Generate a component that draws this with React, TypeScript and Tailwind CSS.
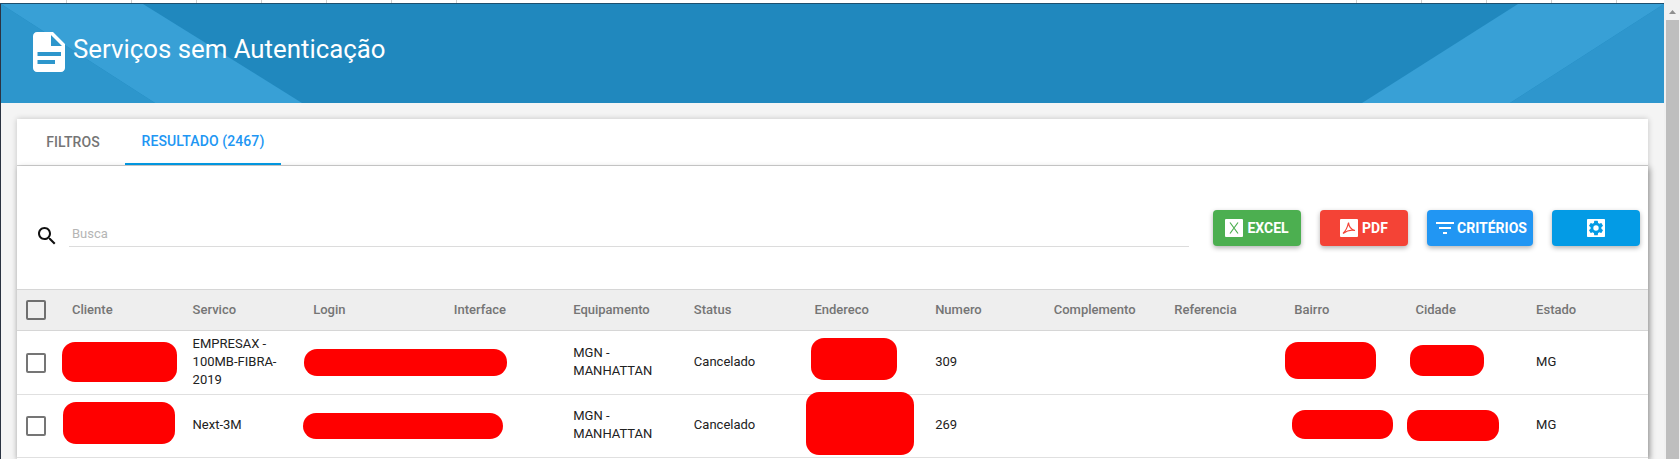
import React from 'react';

const HEADERS = ['Cliente', 'Servico', 'Login', 'Interface', 'Equipamento', 'Status', 'Endereco', 'Numero', 'Complemento', 'Referencia', 'Bairro', 'Cidade', 'Estado'];

function Redact({ className }: { className: string }) {
  return <span className={`absolute z-10 bg-[#ff0000] ${className}`} />;
}

function Checkbox({ header }: { header?: boolean }) {
  return <span className={`block w-[20px] h-[20px] ml-[9px] rounded-[2px] border-2 ${header ? 'border-[#6f6f6f]' : 'border-[#757575]'}`} />;
}

function TopStrip() {
  return (
    <div className="h-[3px] bg-white flex justify-between pl-[2px] pr-[47px]">
      <div className="flex">
        {[0, 1, 2, 3, 4, 5, 6].map((i) => <div key={i} className="w-[65px] border-r border-[#cfcfcf]" />)}
      </div>
      <div className="flex">
        {[0, 1, 2, 3, 4].map((i) => <div key={i} className="w-[65px] border-r border-[#cfcfcf]" />)}
      </div>
    </div>
  );
}

function Banner() {
  return (
    <header className="relative h-[99px] bg-[#2088be] overflow-hidden">
      {/* diagonal bands of the banner artwork */}
      <svg className="absolute inset-0 w-full h-full" viewBox="0 0 1663 99" preserveAspectRatio="none">
        <polygon points="0,0 142,0 301,99 154,99" fill="#38a0d6" />
        <polygon points="0,0 154,99 0,99" fill="#2d96cc" />
        <polygon points="1361,99 1517,0 1663,0 1509,99" fill="#38a0d6" />
        <polygon points="1663,0 1663,99 1509,99" fill="#2e96cd" />
      </svg>
      <div className="relative flex items-start pl-6 pt-6">
        <svg width="48" height="48" viewBox="0 0 24 24" fill="#ffffff">
          <path fillRule="evenodd" d="M14 2H6c-1.1 0-1.99.9-1.99 2L4 20c0 1.1.89 2 1.99 2H18c1.1 0 2-.9 2-2V8l-6-6zm-1 1.5L18.500 9H13V3.500zM6.250 12H18v2H6.250v-2zm0 4H15v2H6.250v-2z" />
        </svg>
        <h1 className="text-[25.8px] leading-[42px] text-white">Serviços sem Autenticação</h1>
      </div>
    </header>
  );
}

function Toolbar() {
  return (
    <div className="h-[123px] flex items-start pt-[44px] pl-[18px] pr-[8px]">
      <div className="flex-1 flex items-end h-[37px] mr-[24px]">
        <svg width="24" height="24" viewBox="0 0 24 24" fill="#111111" className="shrink-0 self-start mt-[14px]">
          <path d="M15.500 14h-.79l-.28-.27C15.410 12.590 16 11.110 16 9.500 16 5.910 13.090 3 9.500 3S3 5.910 3 9.500 5.910 16 9.500 16c1.610 0 3.090-.59 4.230-1.570l.27.28v.79l5 4.990L20.490 19l-4.990-5zm-6 0C7.010 14 5 11.990 5 9.500S7.010 5 9.500 5 14 7.010 14 9.500 11.990 14 9.500 14z" />
        </svg>
        <input placeholder="Busca" className="flex-1 ml-[10px] h-[25px] pl-[3px] pb-[2px] text-[13px] bg-transparent border-b border-[#dcdcdc] outline-none placeholder:text-[#b5b5b5]" />
      </div>
      <div className="flex gap-[19px] text-white text-[14px] font-bold">
        <button className="w-[88px] h-[36px] rounded bg-[#4caf50] shadow-[0_2px_5px_rgba(0,0,0,0.3)] flex items-center justify-center gap-1">
          <svg width="18" height="18" viewBox="0 0 18 18">
            <rect width="18" height="18" rx="1" fill="#ffffff" />
            <path d="M5 3.500L13 14.500M13 3.500L5 14.500" stroke="#4caf50" strokeWidth="1.200" fill="none" />
          </svg>
          EXCEL
        </button>
        <button className="w-[88px] h-[36px] rounded bg-[#f44336] shadow-[0_2px_5px_rgba(0,0,0,0.3)] flex items-center justify-center gap-1">
          <svg width="18" height="18" viewBox="0 0 18 18">
            <rect width="18" height="18" rx="1" fill="#ffffff" />
            <path d="M8.500 3.500C8 6 6.500 11 3 14.500M8.500 3.500C8.800 7 11 10.500 15 11.500C11.500 10.500 7 11.500 3 14.500" stroke="#f44336" strokeWidth="1.200" fill="none" />
          </svg>
          PDF
        </button>
        <button className="w-[106px] h-[36px] rounded bg-[#2196f3] shadow-[0_2px_5px_rgba(0,0,0,0.3)] flex items-center justify-center">
          <svg width="24" height="24" viewBox="0 0 24 24" fill="#ffffff">
            <path d="M10 18h4v-2h-4v2zM3 6v2h18V6H3zm3 7h12v-2H6v2z" />
          </svg>
          CRITÉRIOS
        </button>
        <button className="w-[88px] h-[36px] rounded bg-[#039be5] shadow-[0_2px_5px_rgba(0,0,0,0.3)] flex items-center justify-center">
          <svg width="18" height="18" viewBox="0 0 24 24">
            <rect width="24" height="24" rx="1" fill="#ffffff" />
            <path fill="#039be5" d="M19.140 12.940c.04-.3.060-.61.060-.94 0-.32-.02-.64-.07-.94l2.030-1.580a.49.49 0 0 0 .12-.61l-1.920-3.320a.49.49 0 0 0-.59-.22l-2.390.96c-.5-.38-1.030-.7-1.620-.94l-.36-2.540a.48.480 0 0 0-.48-.41h-3.840a.47.470 0 0 0-.47.410l-.36 2.540c-.59.240-1.130.57-1.620.94l-2.390-.96a.49.49 0 0 0-.59.220L2.740 8.870a.48.480 0 0 0 .12.610l2.030 1.580c-.05.3-.09.63-.09.940s.02.640.07.940l-2.030 1.580a.49.49 0 0 0-.12.610l1.920 3.320c.12.220.37.290.59.220l2.390-.96c.5.380 1.030.7 1.620.94l.36 2.540c.05.240.24.410.48.410h3.840c.24 0 .44-.17.47-.41l.36-2.540c.59-.24 1.130-.56 1.620-.94l2.390.96c.22.080.47 0 .59-.22l1.920-3.320a.48.480 0 0 0-.12-.61l-2.010-1.580zM12 15.600A3.600 3.600 0 1 1 12 8.400a3.600 3.600 0 0 1 0 7.200z" />
          </svg>
        </button>
      </div>
    </div>
  );
}

function DataTable() {
  return (
    <table className="w-full table-fixed text-[13px] text-left">
      <colgroup>
        <col className="w-[55px]" />
        <col className="w-[120.6px]" />
        <col className="w-[120.6px]" />
        <col className="w-[140.6px]" />
        <col className="w-[119.4px]" />
        <col className="w-[120.7px]" />
        <col className="w-[120.6px]" />
        <col className="w-[120.7px]" />
        <col className="w-[118.6px]" />
        <col className="w-[120.6px]" />
        <col className="w-[120px]" />
        <col className="w-[121.1px]" />
        <col className="w-[120.7px]" />
        <col />
      </colgroup>
      <thead>
        <tr className="h-[41px] bg-[#eeeeee] border-y border-[#d6d6d6]">
          <th className="font-normal"><Checkbox header /></th>
          {HEADERS.map((h) => (
            <th key={h} className="font-medium text-[#757575]">{h}</th>
          ))}
        </tr>
      </thead>
      <tbody className="text-[#212121] leading-[18px]">
        <tr className="h-[64px] border-b border-[#e0e0e0]">
          <td><Checkbox /></td>
          <td className="relative"><Redact className="left-[-10px] top-[11px] w-[115px] h-[40px] rounded-[13px]" /></td>
          <td className="pr-4 pb-[2px]">EMPRESAX - 100MB-FIBRA-2019</td>
          <td className="relative"><Redact className="left-[-9px] top-[18px] w-[202.5px] h-[26.500px] rounded-[13px]" /></td>
          <td />
          <td className="pr-4 pb-[2px]">MGN - MANHATTAN</td>
          <td className="pb-[2px]">Cancelado</td>
          <td className="relative"><Redact className="left-[-3.600px] top-[7px] w-[86px] h-[41.500px] rounded-[13px]" /></td>
          <td className="pb-[2px]">309</td>
          <td />
          <td />
          <td className="relative"><Redact className="left-[-9.600px] top-[11px] w-[91px] h-[37px] rounded-[13px]" /></td>
          <td className="relative"><Redact className="left-[-5.700px] top-[14px] w-[74px] h-[30.500px] rounded-[13px]" /></td>
          <td className="pb-[2px]">MG</td>
        </tr>
        <tr className="h-[63px] border-b border-[#e0e0e0]">
          <td><Checkbox /></td>
          <td className="relative"><Redact className="left-[-9px] top-[7px] w-[111.500px] h-[42px] rounded-[13px]" /></td>
          <td className="pb-[2px]">Next-3M</td>
          <td className="relative"><Redact className="left-[-10.500px] top-[18px] w-[200.500px] h-[26px] rounded-[13px]" /></td>
          <td />
          <td className="pr-4 pb-[2px]">MGN - MANHATTAN</td>
          <td className="pb-[2px]">Cancelado</td>
          <td className="relative"><Redact className="left-[-8.600px] top-[-3px] w-[108px] h-[63px] rounded-[13px]" /></td>
          <td className="pb-[2px]">269</td>
          <td />
          <td />
          <td className="relative"><Redact className="left-[-2px] top-[15px] w-[100.500px] h-[28.500px] rounded-[13px]" /></td>
          <td className="relative"><Redact className="left-[-8px] top-[15px] w-[91.500px] h-[30.500px] rounded-[13px]" /></td>
          <td className="pb-[2px]">MG</td>
        </tr>
      </tbody>
    </table>
  );
}

export default function App() {
  return (
    <div className="h-[459px] overflow-hidden flex bg-[#f4f4f4] font-['Roboto',sans-serif]">
      <div className="w-[1664px] shrink-0 flex flex-col">
        <TopStrip />
        <div className="h-px bg-[#1d4f6e]" />
        <div className="flex-1 border-l border-[#2b3342] flex flex-col min-h-0">
          <Banner />
          <div className="ml-[16px] mr-[16px] mt-[16px] flex-1 flex flex-col bg-white shadow-[0_0_6px_rgba(0,0,0,0.2)]">
            <div className="h-[47px] shrink-0 flex pl-[4px] border-b border-[#d0d0d0] text-[14px] font-medium tracking-[0.1px]">
              <div className="w-[104px] flex items-center justify-center text-[#757575]">FILTROS</div>
              <div className="w-[156px] flex items-center justify-center text-[#2196f3] border-b-[2px] border-[#039be5]">RESULTADO (2467)</div>
            </div>
            <div className="flex-1 shadow-[2px_2px_6px_rgba(0,0,0,0.3)]">
              <Toolbar />
              <DataTable />
            </div>
          </div>
        </div>
      </div>
      <div className="w-4 bg-[#f1f1f1] pl-[2px] pr-px flex flex-col">
        <svg width="13" height="20" viewBox="0 0 13 20" className="shrink-0">
          <polygon points="6.500,10 10,14 3,14" fill="#8f8f8f" />
        </svg>
        <div className="flex-1 bg-[#bebebe]" />
      </div>
    </div>
  );
}
